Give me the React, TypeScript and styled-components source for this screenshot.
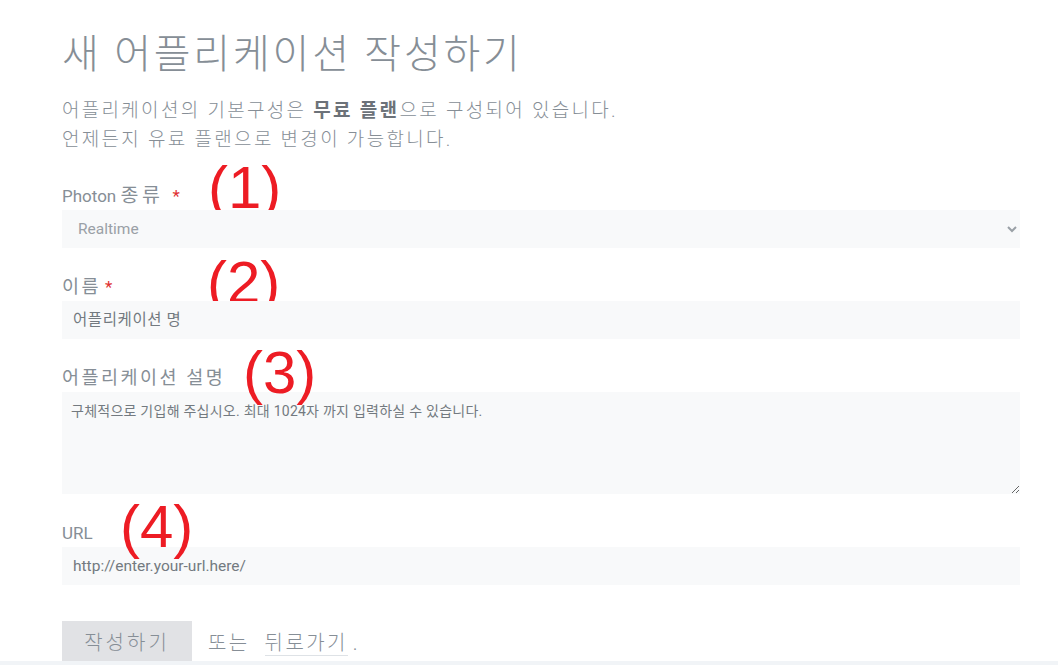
import styled, { createGlobalStyle } from "styled-components";

const Global = createGlobalStyle`
  body {
    margin: 0;
    background: #fff;
    font-family: Roboto, "Noto Sans CJK KR", sans-serif;
  }
`;

const Page = styled.div`
  width: 100%;
  min-height: 666px;
  display: flex;
  flex-direction: column;
`;

const Main = styled.div`
  width: 958px;
  padding: 31px 0 0 62px;
`;

const Title = styled.h1`
  margin: 0;
  font-size: 40px;
  line-height: 48px;
  font-weight: 300;
  letter-spacing: 2.8px;
  color: #868e96;
`;

const Lead = styled.p`
  margin: 17px 0 30px;
  font-size: 19px;
  line-height: 29px;
  font-weight: 300;
  letter-spacing: 2.3px;
  color: #868e96;

  b {
    font-weight: 700;
    color: #6c7279;
  }
`;

const Field = styled.div`
  position: relative;
  margin-bottom: 27px;
`;

const Label = styled.label`
  display: block;
  font-size: 17px;
  line-height: 24px;
  color: #868e96;
  margin-bottom: 2px;
`;

// hangul in labels runs wider than the latin part
const Ko = styled.span<{ $wide?: boolean }>`
  font-size: ${(p) => (p.$wide ? "19.5px" : "18.5px")};
  letter-spacing: ${(p) => (p.$wide ? "3.5px" : "2.5px")};
`;

const Star = styled.span<{ $gap?: number }>`
  color: #e03131;
  margin-left: ${(p) => p.$gap ?? 4}px;
`;

const Mark = styled.span<{ $x: number; $y: number; $behind?: boolean }>`
  position: absolute;
  left: ${(p) => p.$x}px;
  top: ${(p) => p.$y}px;
  font-family: "Liberation Sans", sans-serif;
  font-size: 60px;
  line-height: 60px;
  color: #ed1c24;
  z-index: ${(p) => (p.$behind ? 0 : 2)};
  pointer-events: none;
`;

const controlBase = `
  position: relative;
  z-index: 1;
  display: block;
  width: 100%;
  box-sizing: border-box;
  border: none;
  outline: none;
  background: #f8f9fa;
  font-family: Roboto, "Noto Sans CJK KR", sans-serif;
  font-size: 15.5px;
  color: #6c7279;
  &::placeholder {
    color: #737a80;
  }
`;

const Select = styled.select`
  ${controlBase}
  height: 38px;
  padding: 0 10px 0 12px;
  color: #9aa0a6;
`;

const Input = styled.input<{ $ko?: boolean }>`
  ${controlBase}
  height: 38px;
  padding: 0 11px;
  letter-spacing: ${(p) => (p.$ko ? "0.6px" : "0")};
`;

const Textarea = styled.textarea`
  ${controlBase}
  height: 102px;
  padding: 8px 9px;
  font-size: 14px;
  letter-spacing: 0.25px;
  resize: vertical;
`;

const Actions = styled.div`
  display: flex;
  align-items: center;
  margin-top: 36px;
  font-size: 20px;
  color: #868e96;
  font-weight: 300;
  letter-spacing: 2.4px;
`;

const Submit = styled.button`
  width: 130px;
  height: 40px;
  border: none;
  background: #e1e2e5;
  color: #868e96;
  font-family: Roboto, "Noto Sans CJK KR", sans-serif;
  font-size: 20px;
  font-weight: 300;
  letter-spacing: 3px;
  padding: 0;
  margin-right: 16px;
`;

const Or = styled.span`
  margin-right: 15px;
`;

const Back = styled.a`
  color: #868e96;
  text-decoration: none;
  border-bottom: 1px solid #dee2e6;
  margin-right: 5px;
`;

const Footer = styled.div`
  height: 4px;
  background: #f1f4f7;
`;

export default function App() {
  return (
    <Page>
      <Global />
      <Main>
        <Title>새 어플리케이션 작성하기</Title>
        <Lead>
          어플리케이션의 기본구성은 <b>무료 플랜</b>으로 구성되어 있습니다.
          <br />
          언제든지 유료 플랜으로 변경이 가능합니다.
        </Lead>

        <Field>
          <Label>
            Photon <Ko $wide>종류</Ko>
            <Star $gap={9}>*</Star>
          </Label>
          <Select defaultValue="Realtime">
            <option>Realtime</option>
            <option>Turnbased</option>
            <option>Chat</option>
          </Select>
          <Mark $x={146} $y={-26} $behind>(1)</Mark>
        </Field>

        <Field>
          <Label>
            <Ko>이름</Ko>
            <Star>*</Star>
          </Label>
          <Input $ko placeholder="어플리케이션 명" />
          <Mark $x={145} $y={-22} $behind>(2)</Mark>
        </Field>

        <Field>
          <Label>
            <Ko>어플리케이션 설명</Ko>
          </Label>
          <Textarea placeholder="구체적으로 기입해 주십시오. 최대 1024자 까지 입력하실 수 있습니다." />
          <Mark $x={181} $y={-23}>(3)</Mark>
        </Field>

        <Field>
          <Label>URL</Label>
          <Input placeholder="http://enter.your-url.here/" />
          <Mark $x={58} $y={-24}>(4)</Mark>
        </Field>

        <Actions>
          <Submit>작성하기</Submit>
          <Or>또는</Or>
          <span>
            <Back href="#">뒤로가기</Back>.
          </span>
        </Actions>
      </Main>
      <Footer />
    </Page>
  );
}
